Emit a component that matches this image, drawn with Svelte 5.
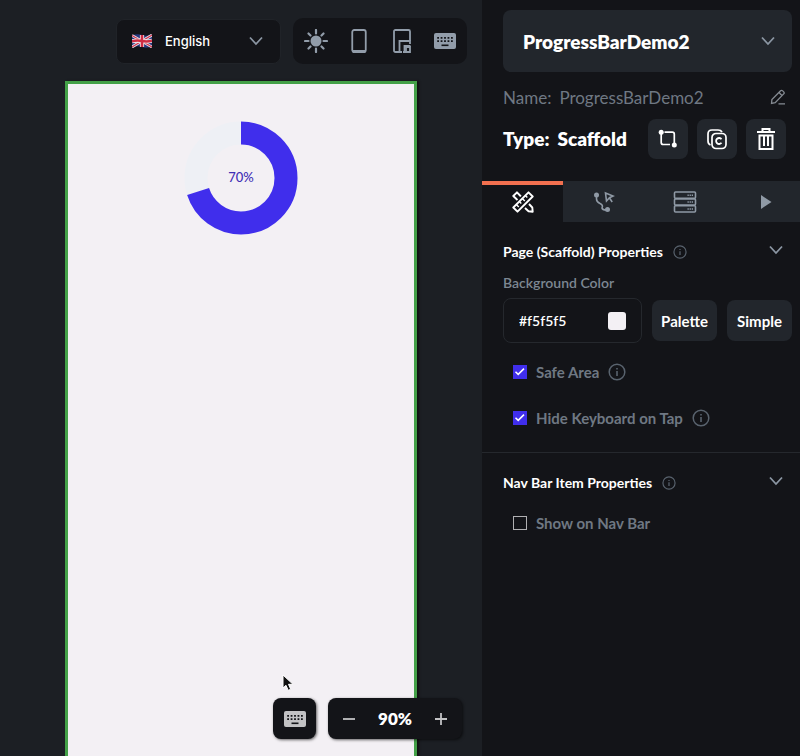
<script>
  let language = $state('English');
  let page = $state('ProgressBarDemo2');
  let color = $state('#f5f5f5');
  let zoom = $state(90);
  let progress = 70;
  let safeArea = $state(true);
  let hideKeyboard = $state(true);
  let showOnNav = $state(false);
  let tab = $state(0);
  const tabs = ['Properties', 'Actions', 'Backend query', 'Animations'];
  const ring = 2 * Math.PI * 45;
</script>

{#snippet chevron()}
  <svg class="chevron" width="16" height="10" viewBox="0 0 16 10" aria-hidden="true"><path d="M2 1.500 8 8l6-6.500" /></svg>
{/snippet}

{#snippet info(size)}
  <svg class="info" width={size} height={size} viewBox="0 0 18 18" aria-hidden="true">
    <circle cx="9" cy="9" r="7.800" fill="none" stroke="currentColor" stroke-width="1.500" />
    <path d="M9 8v5M9 5v1.500" stroke="currentColor" stroke-width="1.600" />
  </svg>
{/snippet}

{#snippet keyboard()}
  <svg width="22" height="16" viewBox="0 0 22 16" aria-hidden="true">
    <rect width="22" height="16" rx="2" fill="currentColor" />
    <path d="M3.200 4.800h15.600M3.200 8.200h15.600" stroke="#131418" stroke-width="1.700" stroke-dasharray="1.800 1.650" />
    <path d="M7.500 12.300h7" stroke="#131418" stroke-width="1.600" />
  </svg>
{/snippet}

{#snippet check(label, checked, toggle, hasInfo)}
  <label class="check">
    <span class="box">
      <input type="checkbox" {checked} onchange={toggle} />
      {#if checked}<svg width="13" height="13" viewBox="0 0 13 13" aria-hidden="true"><path d="m2.500 6.700 2.700 2.700L11 3.600" fill="none" stroke="#fff" stroke-width="1.500" /></svg>{/if}
    </span>
    <span>{label}</span>
    {#if hasInfo}{@render info(18)}{/if}
  </label>
{/snippet}

<div class="app">
  <main class="canvas">
    <div class="toolbar">
      <div class="language">
        <svg class="flag" width="20" height="14" viewBox="0 0 20 14" aria-hidden="true">
          <path d="M0 1.500Q5-.5 10 1t10-.5v12Q15 14.500 10 13T0 13.500Z" fill="#28377d" />
          <path d="m0 1.500 20 11.500M0 13 20 1" stroke="#e8e4ec" stroke-width="2.800" />
          <path d="m0 1.500 20 11.500M0 13 20 1" stroke="#d0334a" stroke-width="1.100" />
          <path d="M10 1v12M0 7.300Q5 6 10 7t10-.3" fill="none" stroke="#eee" stroke-width="4.200" />
          <path d="M10 1v12M0 7.300Q5 6 10 7t10-.3" fill="none" stroke="#cf2c43" stroke-width="2.600" />
        </svg>
        <select aria-label="Language" bind:value={language}><option>English</option></select>
        {@render chevron()}
      </div>
      <div class="devices">
        <button aria-label="Light mode">
          <svg width="24" height="24" viewBox="0 0 24 24"><circle cx="12" cy="12" r="5.500" fill="currentColor" /><path d="M12 1v3.500M12 19.500V23M1 12h3.500M19.500 12H23M4.500 4.500l2 2M17.500 17.500l2 2M4.500 19.500l2-2M17.500 6.500l2-2" stroke="currentColor" stroke-width="2.200" stroke-linecap="round" /></svg>
        </button>
        <button aria-label="Phone">
          <svg width="16" height="24" viewBox="0 0 16 24"><rect x="1.250" y="1" width="13.500" height="22" rx="2" fill="none" stroke="currentColor" stroke-width="1.800" /><path d="M1 21h14v1.500L14 24H2l-1-1.500Z" fill="currentColor" /></svg>
        </button>
        <button aria-label="All devices">
          <svg width="18" height="24" viewBox="0 0 18 24" fill="none" stroke="currentColor" stroke-width="1.800"><path d="M6 23H2.500Q1 23 1 21.500v-19Q1 1 2.500 1h13Q17 1 17 2.500V12" /><path d="M9 23H6.500V12H17v3" /><path d="M11.500 23.500V17h6" /><path d="M10 23h7v-5h-4v5" /></svg>
        </button>
        <button aria-label="Keyboard">{@render keyboard()}</button>
      </div>
    </div>

    <div class="phone">
      <svg class="ring" width="114" height="114" viewBox="0 0 114 114" role="img" aria-label="Progress">
        <circle cx="57" cy="57" r="45" fill="none" stroke="#eef0f5" stroke-width="23" />
        <circle cx="57" cy="57" r="45" fill="none" stroke="#402eec" stroke-width="23" stroke-dasharray="{(ring * progress) / 100} {ring}" transform="rotate(-90 57 57)" />
        <text x="57" y="61" text-anchor="middle">{progress}%</text>
      </svg>
    </div>

    <div class="zoombar">
      <button class="float key" aria-label="Show keyboard">{@render keyboard()}</button>
      <div class="float zoom">
        <button aria-label="Zoom out" onclick={() => (zoom -= 10)}><svg width="14" height="14" viewBox="0 0 14 14"><path d="M1 7h12" stroke="currentColor" stroke-width="1.800" /></svg></button>
        <output>{zoom}%</output>
        <button aria-label="Zoom in" onclick={() => (zoom += 10)}><svg width="14" height="14" viewBox="0 0 14 14"><path d="M1 7h12M7 1v12" stroke="currentColor" stroke-width="1.800" /></svg></button>
      </div>
    </div>
    <svg class="pointer" width="12" height="18" viewBox="0 0 12 18" aria-hidden="true"><path d="M1 1v13l3-2.700 2.200 5 2.500-1-2.200-5H11Z" fill="#111" stroke="#fff" stroke-width="1" /></svg>
  </main>

  <aside class="panel">
    <header>
      <div class="page">
        <select aria-label="Page" bind:value={page}><option>ProgressBarDemo2</option></select>
        {@render chevron()}
      </div>
      <div class="name">
        <span>Name:</span><span>{page}</span>
        <button aria-label="Rename"><svg width="16" height="16" viewBox="0 0 16 16" fill="none" stroke="currentColor" stroke-width="1.300"><path d="m1.500 14.500.4-4L10.600 1.800q1-1 2.100.1l1 1q1 1 0 2L5.200 13.600ZM9 3.500l3.200 3.200M8.500 14.800H15" /></svg></button>
      </div>
      <div class="type">
        <h2>Type:</h2><h2>Scaffold</h2>
        <div class="actions">
          <button aria-label="Wrap widget"><svg width="20" height="20" viewBox="0 0 20 20"><path d="M3.200 5v8.500q0 2 2 2H12M6.500 3.200h7.800q2 0 2 2V14" fill="none" stroke="currentColor" stroke-width="1.700" /><circle cx="3.200" cy="3.200" r="2.500" fill="currentColor" /><circle cx="16.300" cy="16" r="2.500" fill="currentColor" /></svg></button>
          <button aria-label="Convert to component"><svg width="22" height="22" viewBox="0 0 22 22" fill="none" stroke="currentColor" stroke-width="1.700"><rect x="6" y="5.500" width="14" height="15" rx="4" /><path d="M4.500 17Q2 16 2 13V6q0-4 4-4h6q3 0 4 2" /><path d="M15.500 11.200a3 3 0 1 0 0 3.600" stroke-width="1.800" /></svg></button>
          <button aria-label="Delete"><svg width="20" height="24" viewBox="0 0 20 24" fill="none" stroke="currentColor" stroke-width="2"><path d="M1 5h18M6.500 4.500V2h7v2.500M3.500 8v14h13V8M8 9v10M12 9v10M2.500 8.500h15" /></svg></button>
        </div>
      </div>
    </header>

    <nav class="tabs" aria-label="Panel tabs">
      {#each tabs as name, i}
        <button class:active={tab === i} aria-label={name} onclick={() => (tab = i)}>
          {#if i === 0}
            <svg width="22" height="22" viewBox="0 0 22 22" fill="none" stroke="currentColor" stroke-width="1.900" stroke-linejoin="round">
              <path d="M8.500 5 5 1.300 1.300 5 5 8.500M13 17l3.500 3.300 4.200.4-.4-4.200L17 13M5 1.300l4 4M1.300 5 5.500 9" />
              <path d="M16.500 1.300 20.700 5.500 5.500 20.700 1.300 16.500Z" fill="#131418" />
              <path d="m13.300 4.500 2 2M10.300 7.500l2.500 2.500M7.300 10.500l2 2M4.300 13.500l2.500 2.500" stroke-width="1.500" />
            </svg>
          {:else if i === 1}
            <svg width="22" height="22" viewBox="0 0 22 22" fill="none" stroke="currentColor" stroke-width="1.600">
              <path d="M3.500 4v4q0 3 3.500 4.500T9 17q.5 2 4 2" /><circle cx="3.500" cy="4" r="2.500" fill="currentColor" stroke="none" /><circle cx="14.500" cy="18.500" r="2.500" fill="currentColor" stroke="none" />
              <path d="m12.500 2 7.500 3-3.500 1.700L13.500 10ZM16.500 7l2.700 4" />
            </svg>
          {:else if i === 2}
            <svg width="24" height="22" viewBox="0 0 24 22" fill="none" stroke="currentColor" stroke-width="1.600">
              <rect x="1.500" y="1" width="21" height="6.200" rx="1" /><rect x="1.500" y="7.900" width="21" height="6.200" rx="1" /><rect x="1.500" y="14.800" width="21" height="6.200" rx="1" /><path d="M14.500 4.200h5.500M14.500 11h5.500M14.500 18h5.500" stroke-dasharray="1.300 .8" />
            </svg>
          {:else}
            <svg width="12" height="14" viewBox="0 0 12 14"><path d="m1 0 10.500 7L1 14Z" fill="currentColor" /></svg>
          {/if}
        </button>
      {/each}
    </nav>

    <section>
      <div class="title"><h3>Page (Scaffold) Properties</h3>{@render info(14)}<button aria-label="Collapse page properties">{@render chevron()}</button></div>
      <label class="caption" for="bg">Background Color</label>
      <div class="color">
        <div class="field"><input id="bg" type="text" bind:value={color} /><span class="swatch"></span></div>
        <button>Palette</button>
        <button>Simple</button>
      </div>
      {@render check('Safe Area', safeArea, () => (safeArea = !safeArea), true)}
      {@render check('Hide Keyboard on Tap', hideKeyboard, () => (hideKeyboard = !hideKeyboard), true)}
    </section>

    <section class="nav-section">
      <div class="title"><h3>Nav Bar Item Properties</h3>{@render info(14)}<button aria-label="Collapse nav bar properties">{@render chevron()}</button></div>
      {@render check('Show on Nav Bar', showOnNav, () => (showOnNav = !showOnNav), false)}
    </section>
  </aside>
</div>

<style>
  :global(body) { background: #131418; }
  * { box-sizing: border-box; }
  h2, h3 { margin: 0; }
  svg { display: block; flex: none; }
  button { display: flex; align-items: center; justify-content: center; padding: 0; border: 0; background: none; color: inherit; font: inherit; cursor: pointer; }
  select, input { margin: 0; border: 0; background: none; color: inherit; font: inherit; appearance: none; }
  .app { display: flex; min-height: 100vh; overflow: hidden; color: #fff; font-family: Lato, 'Open Sans', sans-serif; }
  .chevron { fill: none; stroke: #8b96a3; stroke-width: 1.800; pointer-events: none; }

  .canvas { position: relative; flex: 1; min-width: 0; display: flex; flex-direction: column; background: #1c1f24; }
  .toolbar { display: flex; justify-content: flex-end; align-items: center; gap: 12px; padding: 18px 15px 17px; }
  .language { display: grid; align-items: center; width: 165px; height: 45px; border: 1px solid #202328; border-radius: 8px; background: #131418; font: 500 13px/20px Inter, sans-serif; }
  .language > * { grid-area: 1 / 1; }
  .language select { width: 100%; height: 100%; padding: 0 48px; }
  .flag { margin-left: 15px; pointer-events: none; }
  .language .chevron { justify-self: end; margin-right: 16px; }
  .devices { display: flex; align-items: center; height: 46px; padding: 0 1px; border-radius: 10px; background: #131418; color: #929daa; }
  .devices button { width: 43px; height: 46px; }
  .phone { flex: 1; display: flex; align-items: flex-start; justify-content: center; width: 352px; margin: 0 auto; padding-top: 37px; border: 3px solid #43a047; border-bottom: 0; background: #f3f0f4; box-shadow: 2px 0 2px #111; }
  .ring text { fill: #402eb5; font: 500 13px Lato, sans-serif; }
  .zoombar { position: absolute; right: 20px; bottom: 17px; display: flex; gap: 12px; }
  .float { height: 41px; border-radius: 8px; background: #131418; box-shadow: 1px 1px 3px #0009; }
  .key { width: 43px; color: #c2c2c4; }
  .zoom { display: flex; align-items: center; width: 134px; padding: 0 4px; }
  .zoom button { width: 34px; height: 40px; color: #c2c2c4; }
  .zoom output { flex: 1; text-align: center; font: 800 17px/24px Lato, sans-serif; }
  .pointer { position: absolute; left: 282px; top: 674px; }

  .panel { flex: none; width: 318px; background: #131418; }
  header { padding: 10px 8px 0 21px; }
  .page { display: grid; align-items: center; height: 62px; border-radius: 8px; background: #22262c; font-size: 19px; font-weight: 800; }
  .page > * { grid-area: 1 / 1; }
  .page select { width: 100%; height: 100%; padding: 0 20px; }
  .page .chevron { justify-self: end; margin-right: 16px; }
  .name { display: flex; align-items: center; gap: 8px; height: 24px; margin-top: 13px; padding-right: 6px; color: #6f7883; font-size: 17px; }
  .name button { margin-left: auto; color: #858b92; }
  .type { display: flex; align-items: center; gap: 8px; margin-top: 10px; padding-right: 6px; }
  .type h2 { font-size: 19px; line-height: 24px; font-weight: 800; }
  .actions { display: flex; gap: 9px; margin-left: auto; }
  .actions button { width: 40px; height: 40px; border-radius: 8px; background: #22262c; }

  .tabs { display: flex; height: 41px; margin-top: 22px; overflow: hidden; background: #22262c; }
  .tabs button { flex: 0 0 81px; color: #8f99a5; }
  .tabs .active { border-top: 4px solid #f2704f; background: #131418; color: #fff; padding-bottom: 4px; }

  section { padding: 18px 8px 11px 21px; }
  .nav-section { border-top: 1px solid #25282d; }
  .title { display: flex; align-items: center; height: 24px; gap: 10px; }
  h3 { font-size: 14px; line-height: 20px; font-weight: 700; white-space: nowrap; }
  .title button { margin-left: auto; padding: 6px 8px 10px; }
  .info { color: #59636e; }
  .caption { display: block; margin: 9px 0 5px; color: #7d8792; font-size: 14px; line-height: 20px; font-weight: 600; }
  .color { display: flex; align-items: center; gap: 10px; margin-bottom: 6px; }
  .field { display: flex; align-items: center; flex: 1; min-width: 0; height: 45px; padding: 0 15px; border: 1px solid #25282d; border-radius: 8px; font-size: 14px; font-weight: 600; }
  .field input { flex: 1; width: 0; padding: 0; }
  .swatch { width: 18px; height: 18px; border-radius: 3px; background: #f3f0f4; }
  .color button { width: 65px; height: 41px; border-radius: 8px; background: #22262c; font-size: 15px; font-weight: 700; }
  .check { display: flex; align-items: center; gap: 9px; width: fit-content; height: 46px; padding-left: 10px; color: #6f7883; font-size: 15px; line-height: 20px; font-weight: 700; }
  .nav-section .check { margin-top: 5px; }
  .box { display: grid; }
  .box > * { grid-area: 1 / 1; }
  .box input { width: 14px; height: 14px; border: 1px solid #b0b0b2; }
  .box input:checked { border: 0; background: #402eec; }
  .box svg { pointer-events: none; }
</style>
